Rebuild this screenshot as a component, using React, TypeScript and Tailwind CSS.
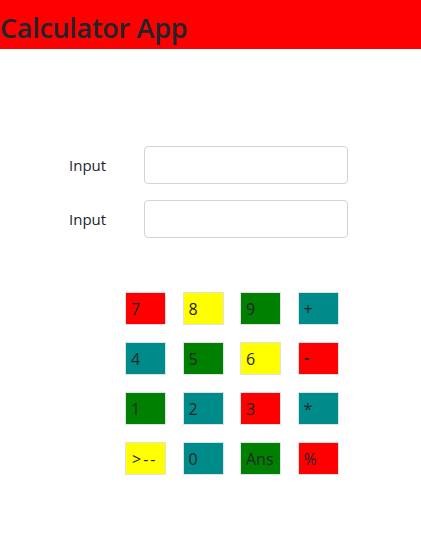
import React from "react";

// Calculator key definition
interface Key {
  label: string;
  color: string;
}

const keys: Key[] = [
  { label: "7", color: "bg-[#ff0000]" },
  { label: "8", color: "bg-[#ffff00]" },
  { label: "9", color: "bg-[#008000]" },
  { label: "+", color: "bg-[#008b8b]" },
  { label: "4", color: "bg-[#008b8b]" },
  { label: "5", color: "bg-[#008000]" },
  { label: "6", color: "bg-[#ffff00]" },
  { label: "-", color: "bg-[#ff0000]" },
  { label: "1", color: "bg-[#008000]" },
  { label: "2", color: "bg-[#008b8b]" },
  { label: "3", color: "bg-[#ff0000]" },
  { label: "*", color: "bg-[#008b8b]" },
  { label: ">--", color: "bg-[#ffff00]" },
  { label: "0", color: "bg-[#008b8b]" },
  { label: "Ans", color: "bg-[#008000]" },
  { label: "%", color: "bg-[#ff0000]" },
];

const App: React.FC = () => {
  return (
    <div className="min-h-screen bg-white font-['Open_Sans',sans-serif] text-[#212529]">
      {/* Header */}
      <header className="h-[49px] overflow-hidden bg-[#ff0000]">
        <h1 className="pt-[10px] text-[27px] font-semibold leading-[36px] tracking-[-0.3px]">
          Calculator App
        </h1>
      </header>

      {/* Inputs */}
      <div className="mt-[97px] flex flex-col gap-4 pl-[69px]">
        {[0, 1].map((i) => (
          <div key={i} className="flex items-center">
            <label className="w-[75px] text-[15px]">Input</label>
            <input
              type="text"
              className="h-[38px] w-[204px] rounded border border-[#ced4da] bg-white px-3"
            />
          </div>
        ))}
      </div>

      {/* Keypad */}
      <div className="mt-[54px] ml-[125px] grid w-[214px] grid-cols-[repeat(4,41px)] gap-x-[16.5px] gap-y-[17px]">
        {keys.map((k) => (
          <button
            key={k.label}
            className={`flex h-[33px] w-[41px] items-center border border-[#dee2e6] ${k.color} pl-[5px] text-left font-['Open_Sans',sans-serif] text-[16px] font-normal leading-none text-[#212529]`}
          >
            {k.label === "-" ? (
              <span className="ml-[1px] mt-[1px] block h-[2px] w-[4px] bg-[#212529]" />
            ) : k.label === ">--" ? (
              <span className="ml-[1px] tracking-[2px]">{k.label}</span>
            ) : (
              k.label
            )}
          </button>
        ))}
      </div>
    </div>
  );
};

export default App;
